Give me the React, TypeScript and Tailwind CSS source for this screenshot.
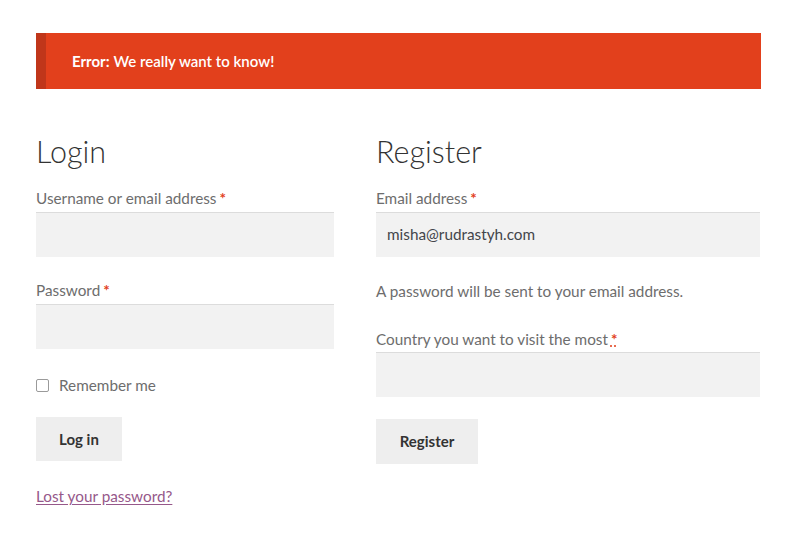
import React from "react";

const Req = () => <span className="text-[#e2401c] font-bold ml-[3px]">*</span>;

export default function App() {
  return (
    <div className="w-[798px] h-[539px] bg-white pl-[36px] pr-[37px] pt-[33px] text-[15.3px] text-[#6d6d6d]" style={{ fontFamily: "Lato, 'Noto Sans', sans-serif" }}>
      <div className="h-[56px] bg-[#e2401c] border-l-[10px] border-[#c0361a] flex items-center pl-[26px] text-white font-semibold text-[15px]">
        <span className="font-bold mr-[4px]">Error:</span>We really want to know!
      </div>
      <div className="flex mt-[42px]">
        <div className="w-[298px] flex flex-col">
          <h2 className="text-[30.5px] leading-[40px] font-light text-[#333333]">Login</h2>
          <label className="mt-[17px] leading-[20px]">Username or email address<Req /></label>
          <div className="mt-[4px] h-[45px] bg-[#f2f2f2] shadow-[inset_0_1px_0_#dcdcdc]" />
          <label className="mt-[23px] leading-[20px]">Password<Req /></label>
          <div className="mt-[4px] h-[45px] bg-[#f2f2f2] shadow-[inset_0_1px_0_#dcdcdc]" />
          <div className="mt-[28px] flex items-center h-[16px]">
            <span className="w-[13px] h-[13px] border border-[#9a9a9a] rounded-[2px] bg-white" />
            <span className="ml-[10px]">Remember me</span>
          </div>
          <button className="mt-[24px] w-[86px] h-[44px] bg-[#eeeeee] text-[#333333] font-bold text-[15px]">Log in</button>
          <a className="mt-[25px] text-[#96588a] underline underline-offset-2 leading-[20px]">Lost your password?</a>
        </div>
        <div className="w-[384px] ml-[42px] flex flex-col">
          <h2 className="text-[30.5px] leading-[40px] font-light text-[#333333]">Register</h2>
          <label className="mt-[17px] leading-[20px]">Email address<Req /></label>
          <div className="mt-[4px] h-[45px] bg-[#f2f2f2] shadow-[inset_0_1px_0_#dcdcdc] flex items-center px-[11px] text-[#43454b]">misha@rudrastyh.com</div>
          <p className="mt-[24px] leading-[20px]">A password will be sent to your email address.</p>
          <label className="mt-[28px] leading-[20px]">Country you want to visit the most<span className="text-[#e2401c] font-bold ml-[3px] underline decoration-dotted">*</span></label>
          <div className="mt-[3px] h-[45px] bg-[#f2f2f2] shadow-[inset_0_1px_0_#dcdcdc]" />
          <button className="mt-[22px] w-[102px] h-[45px] bg-[#eeeeee] text-[#333333] font-bold text-[15px]">Register</button>
        </div>
      </div>
    </div>
  );
}
